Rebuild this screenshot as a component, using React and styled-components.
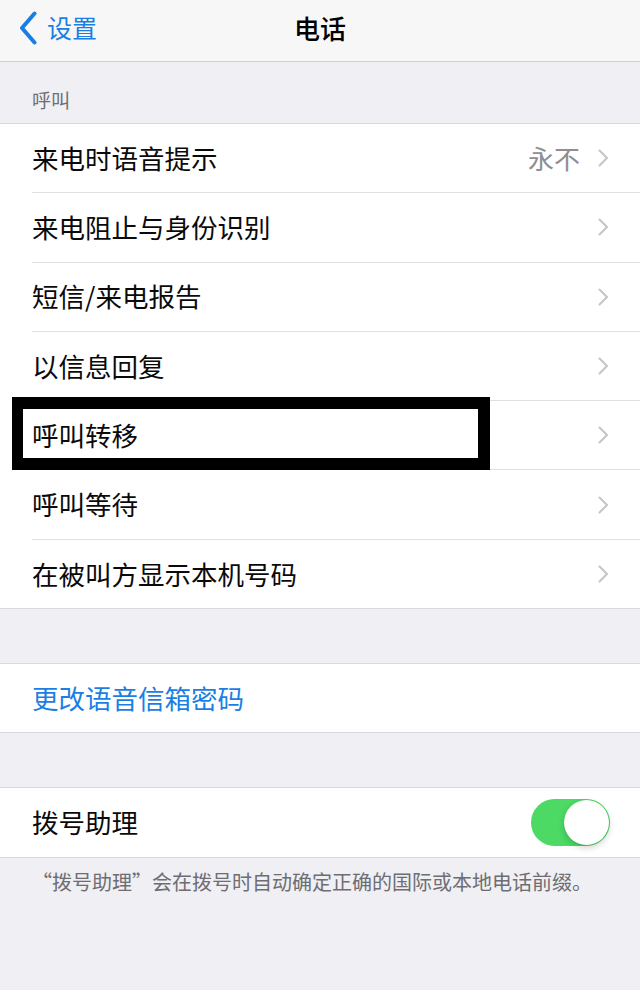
import React from "react";
import styled, { createGlobalStyle } from "styled-components";

const Global = createGlobalStyle`
  html, body { margin: 0; padding: 0; background: #efeff4; }
  body { font-family: "Noto Sans CJK SC", "Noto Sans", sans-serif; }
  * { box-sizing: border-box; }
`;

const Page = styled.div`
  width: 640px;
  min-height: 990px;
  background: #efeff4;
`;

const NavBar = styled.header`
  height: 62px;
  background: #f7f7f7;
  border-bottom: 1px solid #cfcfd3;
  display: grid;
  grid-template-columns: 1fr auto 1fr;
  align-items: center;
  padding: 0 19px 6px 19px;
`;

const Back = styled.div`
  display: flex;
  align-items: center;
  gap: 10px;
  color: #1a7fe3;
  font-size: 25px;
  line-height: 1;
`;

const Title = styled.h1`
  margin: 0;
  font-size: 26px;
  font-weight: 500;
  color: #000;
  line-height: 1;
`;

const SectionHeader = styled.div`
  height: 61px;
  display: flex;
  align-items: flex-end;
  padding: 0 0 14px 32px;
  color: #6d6d72;
  font-size: 19px;
  line-height: 1;
`;

const Group = styled.section`
  background: #fff;
  border-top: 1px solid #dadade;
  border-bottom: 1px solid #dadade;
`;

const Spacer = styled.div`
  height: 54px;
`;

const Row = styled.div`
  position: relative;
  padding-left: 32px;
`;

const RowInner = styled.div`
  height: ${(p) => (p.$last ? "68.3px" : "69.3px")};
  border-bottom: ${(p) => (p.$last ? "none" : "1px solid #e0e0e4")};
  display: flex;
  align-items: center;
  padding-right: 31px;
`;

const Label = styled.span`
  flex: 1;
  font-size: 26.5px;
  line-height: 1;
  color: ${(p) => (p.$blue ? "#1a7fe3" : "#0a0a0a")};
`;

const Detail = styled.span`
  font-size: 26px;
  line-height: 1;
  color: #8e8e93;
  margin-right: 18px;
`;

const Highlight = styled.div`
  position: absolute;
  left: 12px;
  top: -4px;
  width: 478px;
  height: 73px;
  border: 12px solid #000;
  border-left-width: 11px;
  pointer-events: none;
`;

const Toggle = styled.div`
  width: 79px;
  height: 47px;
  border-radius: 24px;
  background: #4cd964;
  position: relative;
  margin-right: -1px;
`;

const Knob = styled.div`
  position: absolute;
  right: 1.5px;
  top: 1px;
  width: 45px;
  height: 45px;
  border-radius: 50%;
  background: #fff;
  box-shadow: 0 3px 6px rgba(0, 0, 0, 0.18), 0 0 1px rgba(0, 0, 0, 0.15);
`;

const Footer = styled.p`
  margin: 0;
  padding: 11px 20px 0 32px;
  font-size: 20px;
  line-height: 1.3;
  color: #6d6d72;
`;

const Chevron = () => (
  <svg width="11" height="18" viewBox="0 0 11 18" fill="none">
    <path d="M1.5 1.5 L9 9 L1.5 16.5" stroke="#c4c4c9" strokeWidth="2" strokeLinecap="round" strokeLinejoin="round" />
  </svg>
);

const BackChevron = () => (
  <svg width="18" height="34" viewBox="0 0 18 34" fill="none">
    <path d="M15.5 2.5 L3 17 L15.5 31.5" stroke="#1a7fe3" strokeWidth="4" strokeLinecap="round" strokeLinejoin="round" />
  </svg>
);

const items = [
  { label: "来电时语音提示", detail: "永不" },
  { label: "来电阻止与身份识别" },
  { label: "短信/来电报告" },
  { label: "以信息回复" },
  { label: "呼叫转移", highlight: true },
  { label: "呼叫等待" },
  { label: "在被叫方显示本机号码" },
];

export default function App() {
  return (
    <Page>
      <Global />
      <NavBar>
        <Back>
          <BackChevron />
          <span>设置</span>
        </Back>
        <Title>电话</Title>
        <div />
      </NavBar>
      <SectionHeader>呼叫</SectionHeader>
      <Group>
        {items.map((it, i) => (
          <Row key={it.label}>
            <RowInner $last={i === items.length - 1}>
              <Label>{it.label}</Label>
              {it.detail && <Detail>{it.detail}</Detail>}
              <Chevron />
            </RowInner>
            {it.highlight && <Highlight />}
          </Row>
        ))}
      </Group>
      <Spacer />
      <Group>
        <Row>
          <RowInner $last>
            <Label $blue>更改语音信箱密码</Label>
          </RowInner>
        </Row>
      </Group>
      <Spacer />
      <Group>
        <Row>
          <RowInner $last>
            <Label>拨号助理</Label>
            <Toggle>
              <Knob />
            </Toggle>
          </RowInner>
        </Row>
      </Group>
      <Footer>“拨号助理”会在拨号时自动确定正确的国际或本地电话前缀。</Footer>
    </Page>
  );
}
